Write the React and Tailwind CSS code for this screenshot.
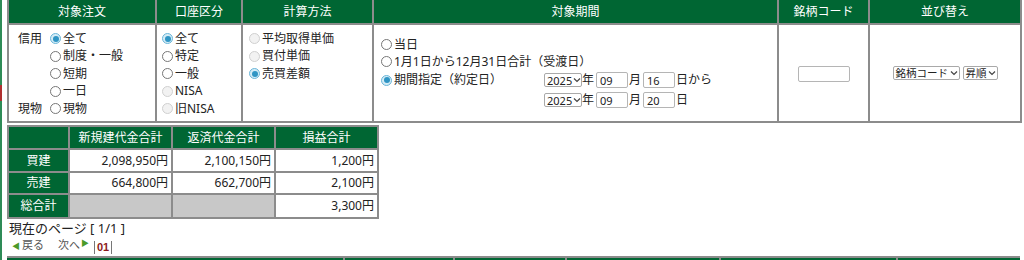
export default function App() {
  return (
    <div className="flex min-h-[260px] bg-white font-['Noto_Sans','Noto_Sans_CJK_JP',sans-serif] text-[12px] text-[#222]">
      <div className="flex w-[2px] flex-col">
        <div className="h-[85px] bg-[#2e8b57]" />
        <div className="h-[16px] bg-[#b03030]" />
        <div className="flex-1 bg-[#2e8b57]" />
      </div>
      <div className="ml-[5px] flex flex-col">
        <SearchTable />
        <SummaryTable />
        <div className="pl-[2px] text-[13px] leading-[18px] text-[#222]">現在のページ [ 1/1 ]</div>
        <Pager />
        <ResultHeader />
      </div>
    </div>
  );
}

function Radio({ checked, disabled }) {
  if (checked) {
    return (
      <span className="mr-[2px] inline-flex h-[11px] w-[11px] shrink-0 items-center justify-center rounded-full border border-[#6bb6d9] bg-[#d4ecf6]">
        <span className="h-[6px] w-[6px] rounded-full bg-[#2f95c4]" />
      </span>
    );
  }
  return (
    <span
      className={`mr-[2px] inline-block h-[11px] w-[11px] shrink-0 rounded-full border ${
        disabled ? "border-[#d0d0d0] bg-[#f2f2f2]" : "border-[#777] bg-white"
      }`}
    />
  );
}

function Opt({ children, checked, disabled, className = "" }) {
  return (
    <div className={`flex h-[17.5px] items-center whitespace-nowrap ${className}`}>
      <Radio checked={checked} disabled={disabled} />
      <span>{children}</span>
    </div>
  );
}

function Select({ children, className = "" }) {
  return (
    <span
      className={`inline-flex h-[14px] items-center justify-between rounded-[2px] border border-[#a9a9a9] bg-white pl-[2px] pr-[1px] leading-none text-[#222] ${className}`}
    >
      <span className="whitespace-nowrap">{children}</span>
      <svg width="8" height="6" viewBox="0 0 8 6" className="ml-[1px] shrink-0">
        <path d="M1 1.5 L4 4.5 L7 1.5" fill="none" stroke="#444" strokeWidth="1.2" />
      </svg>
    </span>
  );
}

function Field({ value = "", className = "" }) {
  return (
    <span
      className={`inline-flex h-[16px] items-center rounded-[2px] border border-[#b5b5b5] bg-white pl-[3px] text-[11px] leading-none text-[#222] ${className}`}
    >
      {value}
    </span>
  );
}

function DateRow({ month, day, suffix }) {
  return (
    <div className="flex items-center whitespace-nowrap">
      <Select className="w-[38px] text-[11px]">2025</Select>
      <span className="mr-[2px]">年</span>
      <Field value={month} className="w-[32px]" />
      <span className="ml-[1px] mr-[2px]">月</span>
      <Field value={day} className="w-[32px]" />
      <span className="ml-[1px]">{suffix}</span>
    </div>
  );
}

function Th({ children, className = "" }) {
  return (
    <th
      className={`border-2 border-t-0 border-[#8c8c8c] bg-[#006633] text-center text-[12px] font-normal text-white ${className}`}
    >
      {children}
    </th>
  );
}

function SearchTable() {
  return (
    <table className="w-[1013px] table-fixed border-collapse">
      <colgroup>
        <col className="w-[148px]" />
        <col className="w-[86px]" />
        <col className="w-[131px]" />
        <col className="w-[405px]" />
        <col className="w-[91px]" />
        <col className="w-[152px]" />
      </colgroup>
      <thead>
        <tr className="h-[24px]">
          <Th>対象注文</Th>
          <Th>口座区分</Th>
          <Th>計算方法</Th>
          <Th>対象期間</Th>
          <Th>銘柄コード</Th>
          <Th>並び替え</Th>
        </tr>
      </thead>
      <tbody>
        <tr className="h-[98px]">
          <td className="border-2 border-[#8c8c8c] pl-[9px] pt-[5px] align-top">
            <div className="flex">
              <div className="flex w-[32px] flex-col">
                <div className="h-[17.5px] leading-[17.5px]">信用</div>
                <div className="h-[52.5px]" />
                <div className="h-[17.5px] leading-[17.5px]">現物</div>
              </div>
              <div className="flex flex-col">
                <Opt checked>全て</Opt>
                <Opt>制度・一般</Opt>
                <Opt>短期</Opt>
                <Opt>一日</Opt>
                <Opt>現物</Opt>
              </div>
            </div>
          </td>
          <td className="border-2 border-[#8c8c8c] pl-[5px] pt-[5px] align-top">
            <Opt checked>全て</Opt>
            <Opt>特定</Opt>
            <Opt>一般</Opt>
            <Opt disabled>NISA</Opt>
            <Opt disabled>旧NISA</Opt>
          </td>
          <td className="border-2 border-[#8c8c8c] pl-[6px] pt-[5px] align-top">
            <Opt disabled>平均取得単価</Opt>
            <Opt disabled>買付単価</Opt>
            <Opt checked>売買差額</Opt>
          </td>
          <td className="border-2 border-[#8c8c8c] pl-[7px] align-middle">
            <Opt className="h-[17px]">当日</Opt>
            <Opt className="h-[17px]">1月1日から12月31日合計（受渡日）</Opt>
            <div className="flex h-[20px] items-center">
              <Opt checked className="w-[163px]">期間指定（約定日）</Opt>
              <DateRow month="09" day="16" suffix="日から" />
            </div>
            <div className="flex h-[20px] items-center pl-[163px]">
              <DateRow month="09" day="20" suffix="日" />
            </div>
          </td>
          <td className="border-2 border-[#8c8c8c] text-center align-middle">
            <span className="inline-block h-[16px] w-[52px] rounded-[2px] border border-[#b5b5b5] bg-white align-middle" />
          </td>
          <td className="border-2 border-[#8c8c8c] text-center align-middle">
            <div className="flex items-center justify-center gap-[3px]">
              <Select className="h-[13px] w-[67px] text-[10.5px]">銘柄コード</Select>
              <Select className="h-[13px] w-[35px] text-[10.5px]">昇順</Select>
            </div>
          </td>
        </tr>
      </tbody>
    </table>
  );
}

function Label({ children }) {
  return (
    <td className="border-2 border-[#8c8c8c] bg-[#006633] text-center text-[12px] text-white">{children}</td>
  );
}

function Val({ children, gray }) {
  return (
    <td
      className={`border-2 border-[#8c8c8c] pr-[3px] text-right text-[12px] ${
        gray ? "bg-[#c8c8c8]" : "bg-white"
      }`}
    >
      {children}
    </td>
  );
}

function SummaryTable() {
  return (
    <table className="mt-[2px] w-[370px] table-fixed border-collapse">
      <colgroup>
        <col className="w-[61px]" />
        <col className="w-[103px]" />
        <col className="w-[103px]" />
        <col className="w-[103px]" />
      </colgroup>
      <thead>
        <tr className="h-[23px]">
          <th className="border-2 border-[#8c8c8c] bg-[#006633]" />
          <th className="border-2 border-[#8c8c8c] bg-[#006633] text-center text-[12px] font-normal text-white">新規建代金合計</th>
          <th className="border-2 border-[#8c8c8c] bg-[#006633] text-center text-[12px] font-normal text-white">返済代金合計</th>
          <th className="border-2 border-[#8c8c8c] bg-[#006633] text-center text-[12px] font-normal text-white">損益合計</th>
        </tr>
      </thead>
      <tbody>
        <tr className="h-[23px]">
          <Label>買建</Label>
          <Val>2,098,950円</Val>
          <Val>2,100,150円</Val>
          <Val>1,200円</Val>
        </tr>
        <tr className="h-[22px]">
          <Label>売建</Label>
          <Val>664,800円</Val>
          <Val>662,700円</Val>
          <Val>2,100円</Val>
        </tr>
        <tr className="h-[24px]">
          <Label>総合計</Label>
          <Val gray />
          <Val gray />
          <Val>3,300円</Val>
        </tr>
      </tbody>
    </table>
  );
}

function Pager() {
  return (
    <div className="flex h-[17px] items-center pl-[5px] text-[11px] text-[#555]">
      <span className="mr-[2px] text-[8px] text-[#4a9a2a]">◀</span>
      <span>戻る</span>
      <span className="ml-[14px]">次へ</span>
      <span className="ml-[1px] -translate-y-[3px] text-[8px] text-[#4a9a2a]">▶</span>
      <span className="ml-[5px] mt-[3px] border-x border-[#777] px-[2px] font-['Liberation_Sans',sans-serif] text-[11px] font-bold leading-[13px] text-[#8b1a1a]">
        01
      </span>
    </div>
  );
}

function ResultHeader() {
  const widths = ["w-[336px]", "w-[110px]", "w-[112px]", "w-[154px]", "w-[177px]", "w-[124px]"];
  return (
    <div className="mt-[2px] flex w-[1013px] border-t-2 border-[#8c8c8c]">
      {widths.map((w, i) => (
        <div key={i} className={`h-[24px] bg-[#006633] ${w} ${i > 0 ? "border-l-2 border-[#8c8c8c]" : ""}`} />
      ))}
    </div>
  );
}
